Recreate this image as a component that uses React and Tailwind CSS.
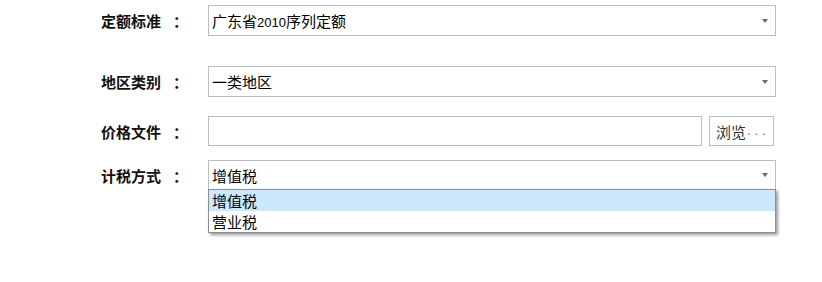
import React from "react";

const cjk = { fontFamily: '"Noto Sans CJK SC", "Microsoft YaHei", sans-serif' };

function Arrow() {
  return (
    <svg width="6" height="4" viewBox="0 0 6 4" className="shrink-0">
      <path d="M0 0 H6 L3 4 Z" fill="#6b6b6b" />
    </svg>
  );
}

function T({ text }) {
  const parts = text.split(/([0-9A-Za-z.]+)/).filter(Boolean);
  return (
    <span className="text-[15px] leading-none">
      {parts.map((p, i) =>
        /^[0-9A-Za-z.]+$/.test(p) ? (
          <span key={i} className="text-[13px] font-['Liberation_Sans',sans-serif]">{p}</span>
        ) : (
          <span key={i}>{p}</span>
        )
      )}
    </span>
  );
}

function Label({ text }) {
  return (
    <div className="w-[107px] shrink-0 flex items-center text-[15px] font-bold text-[#111] leading-none">
      <span className="w-[72px]">{text}</span>
      <span>：</span>
    </div>
  );
}

function Select({ value, children, className = "" }) {
  return (
    <div className={"relative w-[568px] border border-[#bdbdbd] bg-white flex items-center justify-between pl-[3px] pr-[7px] text-black " + className}>
      <T text={value} />
      <Arrow />
      {children}
    </div>
  );
}

export default function App() {
  return (
    <div className="w-[822px] h-[282px] bg-white overflow-hidden" style={cjk}>
      <div className="pl-[101px] pt-[5px] flex flex-col">
        <div className="flex items-center">
          <Label text="定额标准" />
          <Select value="广东省2010序列定额" className="h-[31px]" />
        </div>
        <div className="flex items-center mt-[30px]">
          <Label text="地区类别" />
          <Select value="一类地区" className="h-[31px]" />
        </div>
        <div className="flex items-center mt-[19px]">
          <Label text="价格文件" />
          <div className="w-[494px] h-[30px] border border-[#bdbdbd] bg-white" />
          <button className="ml-[7px] w-[65px] h-[30px] shrink-0 whitespace-nowrap border border-[#bdbdbd] bg-white text-[#333] flex items-center pl-[6px] overflow-hidden">
            <span className="text-[15px] leading-none shrink-0">浏览</span>
            <span className="ml-[1px] shrink-0 text-[13px] tracking-[4px] text-[#666] font-['Liberation_Sans',sans-serif]">...</span>
          </button>
        </div>
        <div className="flex items-center mt-[14px]">
          <Label text="计税方式" />
          <Select value="增值税" className="h-[30px]">
            <div className="absolute left-[-1px] right-[-1px] top-full border border-[#8f8f8f] bg-white shadow-[2px_2px_3px_rgba(0,0,0,0.4)] z-10 text-black">
              <div className="h-[21px] bg-[#cce8ff] flex items-center pl-[3px]">
                <T text="增值税" />
              </div>
              <div className="h-[21px] flex items-center pl-[3px]">
                <T text="营业税" />
              </div>
            </div>
          </Select>
        </div>
      </div>
    </div>
  );
}
